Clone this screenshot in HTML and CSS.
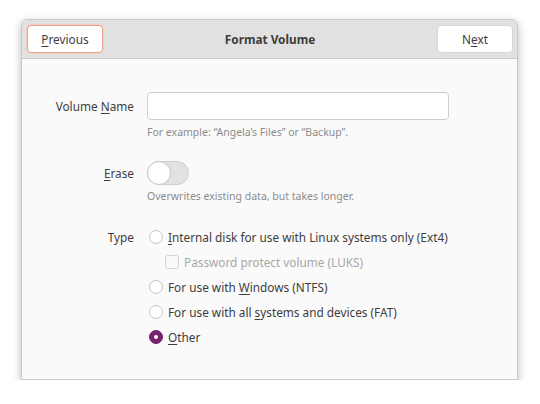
FILE: index.html
```html
<!DOCTYPE html>
<html>
<head>
<meta charset="utf-8">
<link rel="stylesheet" href="styles.css">
</head>
<body>
<div class="window">
  <div class="header">
    <button class="btn btn-focus"><u>P</u>revious</button>
    <div class="title">Format Volume</div>
    <button class="btn">N<u>e</u>xt</button>
  </div>
  <div class="content">
    <div class="label row-entry">Volume <u>N</u>ame</div>
    <div class="entry"></div>
    <div></div>
    <div class="hint hint-1">For example: “Angela’s Files” or “Backup”.</div>
    <div class="label row-switch"><u>E</u>rase</div>
    <div class="switch-cell"><span class="switch"><span class="knob"></span></span></div>
    <div></div>
    <div class="hint hint-2">Overwrites existing data, but takes longer.</div>
    <div class="label row-type">Type</div>
    <div class="options">
      <div class="opt"><span class="radio"></span><span><u>I</u>nternal disk for use with Linux systems only (Ext4)</span></div>
      <div class="opt sub disabled"><span class="check"></span><span>Password protect volume (LUKS)</span></div>
      <div class="opt"><span class="radio"></span><span>For use with <u>W</u>indows (NTFS)</span></div>
      <div class="opt"><span class="radio"></span><span>For use with all <u>s</u>ystems and devices (FAT)</span></div>
      <div class="opt"><span class="radio on"></span><span><u>O</u>ther</span></div>
    </div>
  </div>
</div>
</body>
</html>
```
FILE: styles.css
```css
html, body {
  margin: 0;
  padding: 0;
  background: #ffffff;
}
body {
  font-family: "Noto Sans", "Liberation Sans", sans-serif;
  font-size: 11.8px;
  color: #3d3d3d;
  padding: 19px 0 0 21px;
}
.window {
  width: 497px;
  height: 361px;
  box-sizing: border-box;
  background: #fafafa;
  border: 1px solid #c9c9c9;
  border-radius: 6px 6px 0 0;
  box-shadow: 0 3px 9px rgba(0,0,0,0.28);
  overflow: hidden;
  display: flex;
  flex-direction: column;
}
.header {
  height: 38px;
  flex: none;
  background: #e1e1e1;
  border-bottom: 1px solid #cbcbcb;
  display: flex;
  align-items: center;
  justify-content: space-between;
  padding: 0 4px 0 5px;
}
.btn {
  font: inherit;
  color: #3d3d3d;
  width: 76px;
  height: 28px;
  background: #ffffff;
  border: 1px solid #d6d6d6;
  border-radius: 4px;
  padding: 0;
}
.btn-focus {
  border: 1px solid #e9a08c;
  box-shadow: 0 0 0 1px #f4cfc4;
}
.title {
  font-weight: bold;
  color: #3d3d3d;
}
.content {
  display: grid;
  grid-template-columns: 112px 1fr;
  column-gap: 13px;
  padding-top: 33px;
  align-items: center;
}
.label {
  text-align: right;
}
.entry {
  width: 302px;
  height: 28px;
  box-sizing: border-box;
  background: #ffffff;
  border: 1px solid #cdcdcd;
  border-radius: 4px;
}
.hint {
  font-size: 10.5px;
  color: #8c8c8c;
}
.hint-1 { margin-top: 5px; }
.hint-2 { margin-top: 4px; }
.row-switch, .switch-cell { margin-top: 22px; }
.switch-cell { display: flex; }
.switch {
  width: 42px;
  height: 24px;
  box-sizing: border-box;
  background: #e2e2e2;
  border: 1px solid #cfcfcf;
  border-radius: 12px;
  position: relative;
}
.knob {
  position: absolute;
  left: -1px;
  top: -1px;
  width: 24px;
  height: 24px;
  box-sizing: border-box;
  border-radius: 50%;
  background: #ffffff;
  border: 1px solid #c4c4c4;
}
.row-type {
  align-self: start;
  margin-top: 22px;
  line-height: 25px;
}
.options {
  margin-top: 22px;
  display: flex;
  flex-direction: column;
}
.opt {
  height: 24.8px;
  display: flex;
  align-items: center;
  gap: 5px;
  margin-left: 2px;
}
.opt.sub { margin-left: 18px; }
.opt.disabled { color: #a8a8a8; }
.radio {
  width: 14px;
  height: 14px;
  box-sizing: border-box;
  border-radius: 50%;
  border: 1px solid #c6c6c6;
  background: #ffffff;
  flex: none;
}
.radio.on {
  background: #77216f;
  border-color: #77216f;
  display: flex;
  align-items: center;
  justify-content: center;
}
.radio.on::after {
  content: "";
  width: 4px;
  height: 4px;
  border-radius: 50%;
  background: #ffffff;
}
.check {
  width: 14px;
  height: 14px;
  box-sizing: border-box;
  border: 1px solid #d4d4d4;
  border-radius: 3px;
  background: #fafafa;
  flex: none;
}
u {
  text-decoration-thickness: 1px;
  text-underline-offset: 2px;
}
```
